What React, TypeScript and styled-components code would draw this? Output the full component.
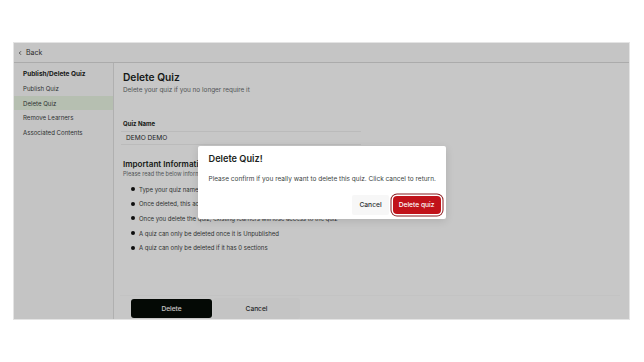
import { FC } from 'react';
import styled, { createGlobalStyle } from 'styled-components';

const GlobalStyle = createGlobalStyle`
  html, body {
    margin: 0;
    padding: 0;
    background: #ffffff;
    font-family: Inter, "Noto Sans", sans-serif;
    color: #1f2326;
  }
  * { box-sizing: border-box; }
`;

const Page = styled.div`
  width: 644px;
  height: 362px;
  padding: 42px 14px 0 13px;
`;

const Frame = styled.div`
  position: relative;
  width: 617px;
  height: 278px;
  display: flex;
  flex-direction: column;
  background: #ffffff;
  border: 1px solid #e4e4e4;
  overflow: hidden;
`;

const TopBar = styled.div`
  height: 20px;
  flex-shrink: 0;
  display: flex;
  align-items: center;
  gap: 3px;
  padding-left: 3px;
  font-size: 7px;
  color: #3a3a3a;
  border-bottom: 1px solid #dcdcdc;
  background: #fdfdfd;
`;

const Body = styled.div`
  flex: 1;
  display: flex;
  min-height: 0;
`;

const Sidebar = styled.nav`
  width: 100px;
  flex-shrink: 0;
  display: flex;
  flex-direction: column;
  padding-top: 3px;
  border-right: 1px solid #e2e2e2;
  background: #fcfcfc;
`;

const SideHeading = styled.div`
  height: 15px;
  display: flex;
  align-items: center;
  padding-left: 9px;
  font-size: 6.5px;
  font-weight: 700;
  color: #1c1f22;
`;

const SideItem = styled.div<{ $active?: boolean }>`
  height: 14.7px;
  display: flex;
  align-items: center;
  padding-left: 9px;
  font-size: 6.1px;
  color: #3b3f42;
  background: ${({ $active }) => ($active ? '#e9f5e3' : 'transparent')};
`;

const Main = styled.main`
  flex: 1;
  display: flex;
  flex-direction: column;
  padding: 7px 0 0 9px;
  background: #ffffff;
`;

const Title = styled.h1`
  margin: 0;
  font-size: 10.2px;
  font-weight: 600;
  color: #1c1f22;
  line-height: 14px;
`;

const Subtitle = styled.p`
  margin: 2px 0 0;
  font-size: 6.4px;
  color: #6b6f72;
`;

const FieldLabel = styled.label`
  display: block;
  margin-top: 26px;
  font-size: 6px;
  font-weight: 700;
  color: #1c1f22;
`;

const Input = styled.div`
  margin: 4px 0 0 -2px;
  width: 240px;
  height: 14px;
  display: flex;
  align-items: center;
  padding-left: 5px;
  font-size: 6.6px;
  color: #2a2d30;
  border-top: 1px solid #f0f0f0;
  border-bottom: 1px solid #f0f0f0;
`;

const SectionTitle = styled.h2`
  margin: 14px 0 0;
  font-size: 8.1px;
  font-weight: 600;
  color: #1c1f22;
`;

const Hint = styled.p`
  margin: 2px 0 0;
  font-size: 5.6px;
  color: #6b6f72;
`;

const Bullets = styled.ul`
  margin: 5px 0 0;
  padding: 0 0 0 8px;
  list-style: none;
  display: flex;
  flex-direction: column;
`;

const Bullet = styled.li`
  height: 14.6px;
  display: flex;
  align-items: center;
  gap: 4px;
  font-size: 6px;
  color: #3b3f42;

  &::before {
    content: '';
    width: 4px;
    height: 4px;
    border-radius: 50%;
    background: #111;
  }
`;

const Footer = styled.div`
  margin-top: auto;
  margin-left: -3px;
  width: 500px;
  height: 24px;
  display: flex;
  align-items: flex-start;
  gap: 1px;
  padding: 2px 0 0 11px;
  background: #ffffff;
  border-top: 1px solid #fafafa;
`;

const FooterButton = styled.button<{ $primary?: boolean }>`
  width: ${({ $primary }) => ($primary ? '81px' : '87px')};
  height: ${({ $primary }) => ($primary ? '19px' : '21px')};
  margin-top: ${({ $primary }) => ($primary ? '1px' : '0')};
  border: none;
  border-radius: 3px;
  font-family: inherit;
  font-size: 6.6px;
  font-weight: 500;
  color: ${({ $primary }) => ($primary ? '#ffffff' : '#2a2d30')};
  background: ${({ $primary }) => ($primary ? '#060c07' : '#fcfcfc')};
`;

const Overlay = styled.div`
  position: absolute;
  inset: 0;
  background: rgba(0, 0, 0, 0.22);
  display: flex;
  align-items: center;
  justify-content: center;
`;

const Modal = styled.div`
  width: 248px;
  height: 73px;
  margin-top: 2px;
  background: #ffffff;
  border-radius: 2px;
  padding: 7px 5px 0 11px;
  display: flex;
  flex-direction: column;
  box-shadow: 0 2px 8px rgba(0, 0, 0, 0.12);
`;

const ModalTitle = styled.h3`
  margin: 0;
  font-size: 9.2px;
  font-weight: 600;
  color: #1c1f22;
  line-height: 12px;
`;

const ModalText = styled.p`
  margin: 10px 0 0;
  font-size: 6.5px;
  white-space: nowrap;
  color: #3b3f42;
`;

const ModalActions = styled.div`
  margin-top: 12px;
  display: flex;
  justify-content: flex-end;
  gap: 4px;
`;

const ModalButton = styled.button<{ $danger?: boolean }>`
  height: ${({ $danger }) => ($danger ? '18px' : '20px')};
  margin-top: ${({ $danger }) => ($danger ? '1px' : '0')};
  padding: 0 ${({ $danger }) => ($danger ? '6px' : '7px')};
  border: none;
  border-radius: ${({ $danger }) => ($danger ? '4px' : '2px')};
  font-family: inherit;
  font-size: 6.7px;
  font-weight: 500;
  color: ${({ $danger }) => ($danger ? '#ffffff' : '#2a2d30')};
  background: ${({ $danger }) => ($danger ? '#c1121a' : '#f7f7f7')};
  box-shadow: ${({ $danger }) =>
    $danger ? '0 0 0 1.5px #ffffff, 0 0 0 2.5px #8a1a1f' : 'none'};
`;

const BackChevron: FC = () => (
  <svg width="6" height="6" viewBox="0 0 24 24" fill="none" stroke="#3a3a3a" strokeWidth="3" strokeLinecap="round" strokeLinejoin="round">
    <path d="M15 18l-6-6 6-6" />
  </svg>
);

const sideItems = ['Publish Quiz', 'Delete Quiz', 'Remove Learners', 'Associated Contents'];

const rules = [
  'Type your quiz name * in the field above to confirm deletion',
  'Once deleted, this action cannot be undone',
  'Once you delete the quiz, existing learners will lose access to the quiz',
  'A quiz can only be deleted once it is Unpublished',
  'A quiz can only be deleted if it has 0 sections',
];

const App: FC = () => (
  <>
    <GlobalStyle />
    <Page>
      <Frame>
        <TopBar>
          <BackChevron />
          <span>Back</span>
        </TopBar>

        <Body>
          <Sidebar>
            <SideHeading>Publish/Delete Quiz</SideHeading>
            {sideItems.map((item) => (
              <SideItem key={item} $active={item === 'Delete Quiz'}>
                {item}
              </SideItem>
            ))}
          </Sidebar>

          <Main>
            <Title>Delete Quiz</Title>
            <Subtitle>Delete your quiz if you no longer require it</Subtitle>

            <FieldLabel>Quiz Name</FieldLabel>
            <Input>DEMO DEMO</Input>

            <SectionTitle>Important Information</SectionTitle>
            <Hint>Please read the below information carefully before deleting your quiz</Hint>
            <Bullets>
              {rules.map((rule) => (
                <Bullet key={rule}>{rule}</Bullet>
              ))}
            </Bullets>

            <Footer>
              <FooterButton $primary>Delete</FooterButton>
              <FooterButton>Cancel</FooterButton>
            </Footer>
          </Main>
        </Body>

        <Overlay>
          <Modal>
            <ModalTitle>Delete Quiz!</ModalTitle>
            <ModalText>
              Please confirm if you really want to delete this quiz. Click cancel to return.
            </ModalText>
            <ModalActions>
              <ModalButton>Cancel</ModalButton>
              <ModalButton $danger>Delete quiz</ModalButton>
            </ModalActions>
          </Modal>
        </Overlay>
      </Frame>
    </Page>
  </>
);

export default App;
